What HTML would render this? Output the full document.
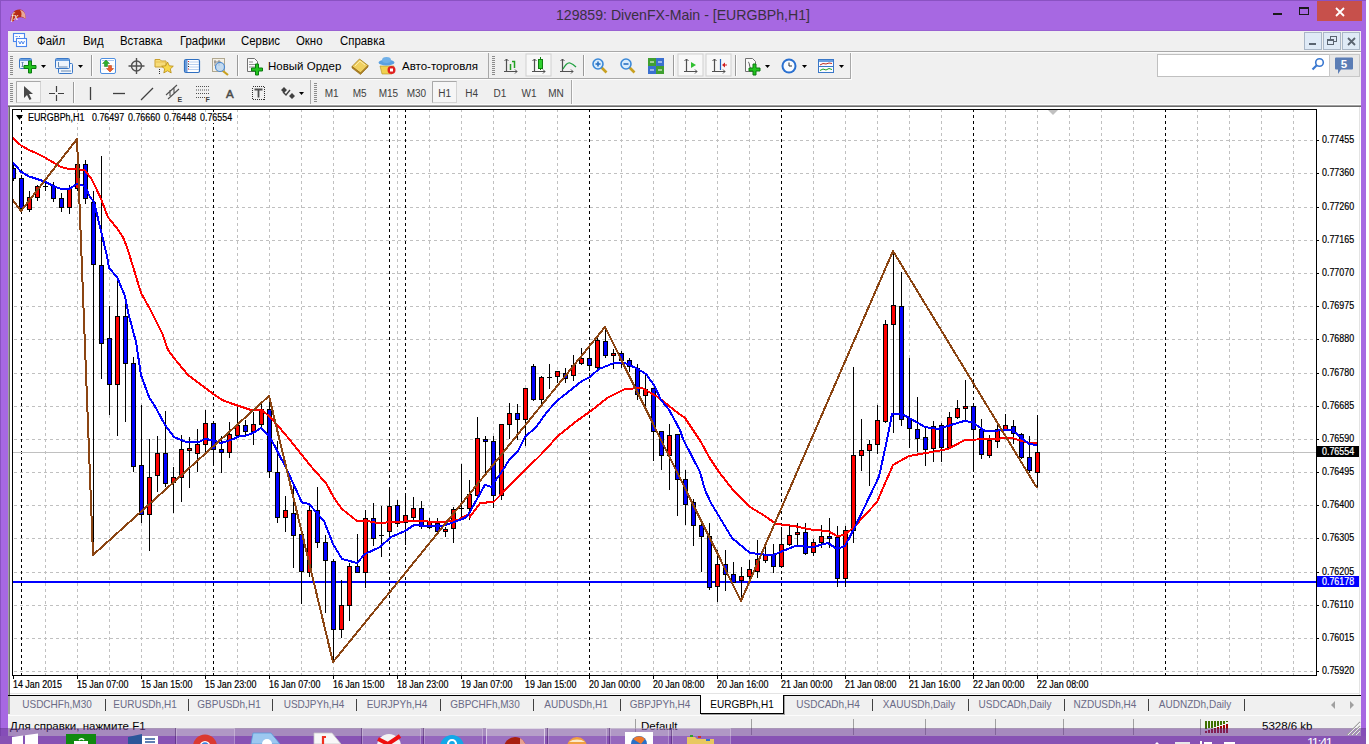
<!DOCTYPE html>
<html><head><meta charset="utf-8"><title>MT4</title>
<style>
*{margin:0;padding:0;box-sizing:border-box}
html,body{width:1369px;height:744px;overflow:hidden}
body{position:relative;background:#a768e2;font-family:"Liberation Sans",sans-serif;font-size:11px;color:#000}
.a{position:absolute}
.t{position:absolute;white-space:pre;line-height:1}
.b{-webkit-text-stroke:.2px currentColor}
.sep{position:absolute;width:1px;background:#a0a0a0}
.grip{position:absolute;width:5px;background:repeating-linear-gradient(#909090 0 1px,transparent 1px 2px)}
</style></head><body>

<div class="a" style="left:0;top:0;width:1369px;height:1px;background:#8a52c2"></div>
<div class="a" style="left:0;top:0;width:1px;height:744px;background:#8a52c2"></div>
<svg class="a" style="left:9px;top:8px" width="18" height="15"><path d="M1.5 13 C1 5 6 1 11 1.5 C15 2 17 6 16.5 11 C13 8 8 8.5 4 13.5 Z" fill="#b52a16"/><path d="M11 2 C15 2.5 17 6 16.5 11 C15 9 13.5 8.6 12 8.4 C13 6 12.5 4 11 2Z" fill="#e8a898"/><text x="2" y="12" font-family="Liberation Serif" font-style="italic" font-size="10" fill="#fff">fx</text></svg>
<div class="t" style="left:556px;top:7px;font-size:15px;color:#3a3040;transform:scaleX(.94);transform-origin:0 0">129859: DivenFX-Main - [EURGBPh,H1]</div>
<div class="a" style="left:1273px;top:13px;width:9px;height:2px;background:#1a1a1a"></div>
<div class="a" style="left:1299px;top:7px;width:10px;height:8px;border:1px solid #1a1a1a;border-top-width:2px"></div>
<div class="a" style="left:1317px;top:1px;width:45px;height:20px;background:#c7504b"></div>
<svg class="a" style="left:1335px;top:7px" width="10" height="10"><path d="M1 1L9 9M9 1L1 9" stroke="#fff" stroke-width="1.8"/></svg>
<div class="a" style="left:8px;top:30px;width:1353px;height:1px;background:#9a62d2"></div>
<div class="a" style="left:8px;top:31px;width:1353px;height:713px;background:#f0f0f0"></div>
<svg class="a" style="left:0;top:0" width="40" height="52"><rect x="13.5" y="33.5" width="11" height="8" fill="#fff" stroke="#4a86ee" stroke-width="1.1"/><path d="M15.5 37l1-1 1 1M19 36l1 1" stroke="#4a86ee" fill="none"/><rect x="16.5" y="38.5" width="10" height="8" fill="#fff" stroke="#4a86ee" stroke-width="1.1"/><path d="M18.5 41l1.5 3 1.5-3 1.5 3 1.5-3" stroke="#4a86ee" fill="none"/></svg>
<div class="t" style="left:37px;top:35px;font-size:12px;transform:scaleX(.95);transform-origin:0 0">Файл</div>
<div class="t" style="left:83px;top:35px;font-size:12px;transform:scaleX(.95);transform-origin:0 0">Вид</div>
<div class="t" style="left:120px;top:35px;font-size:12px;transform:scaleX(.95);transform-origin:0 0">Вставка</div>
<div class="t" style="left:180px;top:35px;font-size:12px;transform:scaleX(.95);transform-origin:0 0">Графики</div>
<div class="t" style="left:241px;top:35px;font-size:12px;transform:scaleX(.95);transform-origin:0 0">Сервис</div>
<div class="t" style="left:296px;top:35px;font-size:12px;transform:scaleX(.95);transform-origin:0 0">Окно</div>
<div class="t" style="left:340px;top:35px;font-size:12px;transform:scaleX(.95);transform-origin:0 0">Справка</div>
<div class="a" style="left:1304px;top:32px;width:18px;height:18px;background:#dfeaf6;border:1px solid #a9b6c6"></div>
<div class="a" style="left:1323px;top:32px;width:18px;height:18px;background:#dfeaf6;border:1px solid #a9b6c6"></div>
<div class="a" style="left:1342px;top:32px;width:18px;height:18px;background:#dfeaf6;border:1px solid #a9b6c6"></div>
<div class="a" style="left:1309px;top:43px;width:7px;height:2px;background:#5a6470"></div>
<svg class="a" style="left:1327px;top:36px" width="10" height="10"><rect x="3.5" y="0.5" width="6" height="5" fill="none" stroke="#5a6470"/><rect x="0.5" y="3.5" width="6" height="5" fill="#dfeaf6" stroke="#5a6470"/><path d="M0.5 4.5h6" stroke="#5a6470"/></svg>
<svg class="a" style="left:1347px;top:37px" width="9" height="9"><path d="M1 1L8 8M8 1L1 8" stroke="#5a6470" stroke-width="1.8"/></svg>
<div class="a" style="left:8px;top:51px;width:1353px;height:1px;background:#a8a8a8"></div>
<div class="a" style="left:8px;top:52px;width:1353px;height:1px;background:#fcfcfc"></div>
<div class="a" style="left:8px;top:78px;width:843px;height:1px;background:#a8a8a8"></div>
<div class="a" style="left:8px;top:79px;width:844px;height:1px;background:#fcfcfc"></div>
<svg class="a" style="left:0;top:0" width="1369" height="110"><rect x="10" y="56" width="3" height="1" fill="#8c8c8c"/><rect x="10" y="58" width="3" height="1" fill="#8c8c8c"/><rect x="10" y="60" width="3" height="1" fill="#8c8c8c"/><rect x="10" y="62" width="3" height="1" fill="#8c8c8c"/><rect x="10" y="64" width="3" height="1" fill="#8c8c8c"/><rect x="10" y="66" width="3" height="1" fill="#8c8c8c"/><rect x="10" y="68" width="3" height="1" fill="#8c8c8c"/><rect x="10" y="70" width="3" height="1" fill="#8c8c8c"/><rect x="10" y="72" width="3" height="1" fill="#8c8c8c"/><rect x="10" y="74" width="3" height="1" fill="#8c8c8c"/><rect x="19.5" y="58.5" width="12" height="10" rx="1" fill="#eef4fc" stroke="#3a78c8"/><rect x="20" y="59" width="11" height="2" fill="#6aa0e0"/><path d="M22.5 62v5M21.5 63l1-1 1 1M21.5 66l1 1 1-1" stroke="#6a8ab0" fill="none"/><path d="M28.5 61h3v4.5h4.5v3h-4.5v4.5h-3v-4.5h-4.5v-3h4.5z" fill="#22c41e" stroke="#0b7a10" stroke-width="1"/><path d="M41 65h5l-2.5 3z" fill="#000"/><rect x="58.5" y="63.5" width="14" height="10" rx="1" fill="#eef4fc" stroke="#3a78c8"/><rect x="55.5" y="58.5" width="14" height="10" rx="1" fill="#eef4fc" stroke="#3a78c8"/><rect x="56" y="59" width="13" height="2" fill="#6aa0e0"/><path d="M58.5 62v5h9M61 71h10" stroke="#6a8ab0" fill="none"/><path d="M78 65h5l-2.5 3z" fill="#000"/><rect x="91" y="55" width="1" height="21" fill="#9a9a9a"/><rect x="92" y="55" width="1" height="21" fill="#fdfdfd"/><rect x="100.5" y="58.5" width="15" height="15" rx="1.5" fill="#ffffff" stroke="#4f8fe0"/><path d="M102 60.5h12" stroke="#a8c8f0"/><path d="M101.5 66h13M101.5 69h13" stroke="#e0e0e0"/><path d="M106 60l3.5 3.5h-2v3h-3v-3h-2z" fill="#2cb02c" stroke="#1a7a1a" stroke-width=".5"/><path d="M110 72l3.5-3.5h-2v-3h-3v3h-2z" fill="#f05a28" stroke="#b03a10" stroke-width=".5"/><circle cx="136.5" cy="66" r="5" fill="none" stroke="#505050" stroke-width="1.4"/><path d="M136.5 58v16M128.5 66h16" stroke="#505050" stroke-width="1.4"/><path d="M155 59.5h5l1.5 1.5h4.5v6h-11z" fill="#f6dc7a" stroke="#c9a030"/><path d="M155 62h11" stroke="#e8c050"/><path d="M159.5 69v6" stroke="#303030" stroke-dasharray="1,1"/><path d="M167.5 62l1.8 3.8 4 .4-3 2.7.9 4-3.7-2.1-3.7 2.1.9-4-3-2.7 4-.4z" fill="#f8d84a" stroke="#b88a10" stroke-width=".8"/><rect x="184.5" y="59.5" width="15" height="13" rx="1.5" fill="#fff" stroke="#2f6fc0" stroke-width="1.2"/><rect x="185" y="60" width="2.5" height="12" fill="#6a9ad8"/><path d="M189 62h10M189 64.5h10M189 67h10M189 69.5h10" stroke="#b8d0f0"/><rect x="188" y="61" width="1" height="1" fill="#e02020"/><rect x="188" y="63.5" width="1" height="1" fill="#202020"/><rect x="188" y="66" width="1" height="1" fill="#202020"/><rect x="188" y="68.5" width="1" height="1" fill="#e02020"/><rect x="212.5" y="58.5" width="12" height="13" fill="#f4efe4" stroke="#b0a890"/><path d="M215 60v6M219 60v6M214 62h7" stroke="#707070" stroke-width=".8"/><path d="M223 71l5 4" stroke="#c8a020" stroke-width="2.2"/><circle cx="220" cy="67" r="4.5" fill="#b8d4f0" fill-opacity=".8" stroke="#4a88d0" stroke-width="1.2"/><rect x="237" y="55" width="1" height="21" fill="#9a9a9a"/><rect x="238" y="55" width="1" height="21" fill="#fdfdfd"/><path d="M247.5 58.5h7l3 3v10h-10z" fill="#fafafa" stroke="#707070"/><path d="M249 62h4M249 64.5h6M249 67h6" stroke="#909090"/><path d="M255.5 64.0h3v4.0h4.0v3h-4.0v4.0h-3v-4.0h-4.0v-3h4.0z" fill="#22c41e" stroke="#0b7a10" stroke-width="1"/><path d="M352 66.5l7.5-7.5 8.5 6.5-7.5 7.5z" fill="#f0d060" stroke="#a07818" stroke-width=".8"/><path d="M352 66.5v1.5l8.5 6.5 7.5-7.5v-1.5l-7.5 7.5z" fill="#b88a20" stroke="#8a6010" stroke-width=".6"/><path d="M355 66l5-5 5 4" fill="none" stroke="#fff4c0" stroke-width=".8"/><path d="M380 66h14l-2 8h-10z" fill="#f0d050" stroke="#b09020" stroke-width=".6"/><ellipse cx="386.5" cy="62.5" rx="8" ry="3" fill="#5aa0e0"/><ellipse cx="386.5" cy="60" rx="4.5" ry="3" fill="#70b0e8"/><circle cx="391.5" cy="70" r="4" fill="#e02020"/><rect x="390" y="68.5" width="3" height="3" fill="#fff"/><rect x="488" y="53" width="1" height="26" fill="#a8a8a8"/><rect x="492" y="56" width="3" height="1" fill="#8c8c8c"/><rect x="492" y="58" width="3" height="1" fill="#8c8c8c"/><rect x="492" y="60" width="3" height="1" fill="#8c8c8c"/><rect x="492" y="62" width="3" height="1" fill="#8c8c8c"/><rect x="492" y="64" width="3" height="1" fill="#8c8c8c"/><rect x="492" y="66" width="3" height="1" fill="#8c8c8c"/><rect x="492" y="68" width="3" height="1" fill="#8c8c8c"/><rect x="492" y="70" width="3" height="1" fill="#8c8c8c"/><rect x="492" y="72" width="3" height="1" fill="#8c8c8c"/><rect x="492" y="74" width="3" height="1" fill="#8c8c8c"/><path d="M506.5 59v13M504 71.5h13" stroke="#505050" stroke-width="1.2"/><path d="M504.5 61l2-2 2 2M515 69.5l2 2-2 2" fill="none" stroke="#505050"/><path d="M510.5 70v-6M512 61.5h2.5v6.5" fill="none" stroke="#20a020" stroke-width="1.5"/><rect x="526" y="54" width="25" height="22" fill="#f8f8f8" stroke="#d0d0d0"/><path d="M534.5 59v13M532 71.5h13" stroke="#505050" stroke-width="1.2"/><path d="M532.5 61l2-2 2 2M543 69.5l2 2-2 2" fill="none" stroke="#505050"/><path d="M540.5 57v13" stroke="#108010"/><rect x="538.5" y="59.5" width="4" height="9" fill="#30d030" stroke="#108010"/><path d="M562.5 59v13M560 71.5h13" stroke="#505050" stroke-width="1.2"/><path d="M560.5 61l2-2 2 2M571 69.5l2 2-2 2" fill="none" stroke="#505050"/><path d="M563 69q4-7 7-6t6 4" fill="none" stroke="#20a040" stroke-width="1.3"/><rect x="583" y="55" width="1" height="21" fill="#9a9a9a"/><rect x="584" y="55" width="1" height="21" fill="#fdfdfd"/><path d="M601.5 67.5l5 5" stroke="#c8a020" stroke-width="2.6"/><circle cx="598" cy="64" r="5" fill="#d8ecfc" stroke="#3a88d8" stroke-width="1.6"/><path d="M595.5 64h5" stroke="#2a70c0" stroke-width="1.6"/><path d="M598 61.5v5" stroke="#2a70c0" stroke-width="1.6"/><path d="M629.5 67.5l5 5" stroke="#c8a020" stroke-width="2.6"/><circle cx="626" cy="64" r="5" fill="#d8ecfc" stroke="#3a88d8" stroke-width="1.6"/><path d="M623.5 64h5" stroke="#2a70c0" stroke-width="1.6"/><rect x="648" y="58" width="8" height="8" fill="#40a030"/><rect x="656" y="58" width="8" height="8" fill="#3a70d0"/><rect x="648" y="66" width="8" height="8" fill="#3a70d0"/><rect x="656" y="66" width="8" height="8" fill="#40a030"/><path d="M650 62h4M658 62h4M650 70h4M658 70h4" stroke="#fff"/><rect x="673" y="55" width="1" height="21" fill="#9a9a9a"/><rect x="674" y="55" width="1" height="21" fill="#fdfdfd"/><rect x="678" y="54" width="25" height="22" fill="#f8f8f8" stroke="#d0d0d0"/><path d="M686.5 59v13M684 71.5h13" stroke="#505050" stroke-width="1.2"/><path d="M684.5 61l2-2 2 2M695 69.5l2 2-2 2" fill="none" stroke="#505050"/><path d="M691 62v6l5-3z" fill="#30c030"/><rect x="706" y="54" width="25" height="22" fill="#f8f8f8" stroke="#d0d0d0"/><path d="M714.5 59v13M712 71.5h13" stroke="#505050" stroke-width="1.2"/><path d="M712.5 61l2-2 2 2M723 69.5l2 2-2 2" fill="none" stroke="#505050"/><path d="M720.5 59v11" stroke="#2060c0" stroke-width="1.2"/><path d="M722 65l3-2.5v5z" fill="#d02020"/><path d="M724 65h3" stroke="#d02020"/><rect x="735" y="55" width="1" height="21" fill="#9a9a9a"/><rect x="736" y="55" width="1" height="21" fill="#fdfdfd"/><path d="M745.5 58.5h7l3 3v10h-10z" fill="#fafafa" stroke="#707070"/><path d="M748 62c2 0 1 6 3 6" fill="none" stroke="#606060"/><path d="M753.0 64.0h3v4.0h4.0v3h-4.0v4.0h-3v-4.0h-4.0v-3h4.0z" fill="#22c41e" stroke="#0b7a10" stroke-width="1"/><path d="M765 65h5l-2.5 3z" fill="#000"/><circle cx="789" cy="66" r="7.5" fill="#2a70d0"/><circle cx="789" cy="66" r="5.5" fill="#fafcff"/><path d="M789 62.5v3.5h3" fill="none" stroke="#303030"/><path d="M802 65h5l-2.5 3z" fill="#000"/><rect x="818.5" y="59.5" width="15" height="13" fill="#fafcff" stroke="#3a78c8"/><rect x="819" y="60" width="14" height="2" fill="#6aa0e0"/><path d="M819 66.5h14" stroke="#3a78c8"/><path d="M820 65l3-1.5 3 .5 3-1 3 .5" fill="none" stroke="#c03020"/><path d="M820 70.5l3-1.5 3 1 3-1.5 3 1" fill="none" stroke="#20a020"/><path d="M839 65h5l-2.5 3z" fill="#000"/><rect x="850" y="53" width="1" height="26" fill="#a8a8a8"/><rect x="851" y="53" width="1" height="27" fill="#fcfcfc"/><rect x="10" y="83" width="3" height="1" fill="#8c8c8c"/><rect x="10" y="85" width="3" height="1" fill="#8c8c8c"/><rect x="10" y="87" width="3" height="1" fill="#8c8c8c"/><rect x="10" y="89" width="3" height="1" fill="#8c8c8c"/><rect x="10" y="91" width="3" height="1" fill="#8c8c8c"/><rect x="10" y="93" width="3" height="1" fill="#8c8c8c"/><rect x="10" y="95" width="3" height="1" fill="#8c8c8c"/><rect x="10" y="97" width="3" height="1" fill="#8c8c8c"/><rect x="10" y="99" width="3" height="1" fill="#8c8c8c"/><rect x="10" y="101" width="3" height="1" fill="#8c8c8c"/><rect x="16.5" y="81.5" width="24" height="21" fill="#f6f6f6" stroke="#d4d4d4"/><path d="M16.5 102.5v-21h24" fill="none" stroke="#a8a8a8"/><path d="M24 86v12l3-3 2.5 5 2-1-2.5-5h4z" fill="#484848"/><path d="M49 93.5h6M58 93.5h6M56.5 86v6M56.5 95v6" stroke="#404040" stroke-width="1.2"/><rect x="73" y="82" width="1" height="21" fill="#9a9a9a"/><rect x="74" y="82" width="1" height="21" fill="#fdfdfd"/><path d="M90.5 87v13" stroke="#404040" stroke-width="1.3"/><path d="M113 93.5h12" stroke="#404040" stroke-width="1.3"/><path d="M141 100l12-12" stroke="#404040" stroke-width="1.2"/><path d="M166 95l11-10M168 99l11-10M170 90v6M174 87v7" stroke="#505050" stroke-width="1.1"/><text x="177.5" y="101.5" font-family="Liberation Sans" font-weight="bold" font-size="7" fill="#404040">E</text><path d="M196 86.5h13M196 90h13M196 93.5h13M196 97.5h9" stroke="#505050" stroke-dasharray="1,1"/><text x="205.5" y="101.5" font-family="Liberation Sans" font-weight="bold" font-size="7" fill="#404040">F</text><text x="226" y="97.5" font-family="Liberation Sans" font-size="11.5" fill="#4a4a4a" stroke="#4a4a4a" stroke-width=".5">A</text><rect x="252.5" y="86.5" width="12" height="13" fill="none" stroke="#303030" stroke-dasharray="1,1" shape-rendering="crispEdges"/><path d="M254.5 89.5h8M258.5 89.5v8" stroke="#505050" stroke-width="1.8"/><path d="M281 90l3-3 3 3-3 3z M289 96l3-3 3 3-3 3z" fill="#404040"/><path d="M283 92l3 3 4-5" fill="none" stroke="#404040" stroke-width="1.4"/><path d="M299 92h5l-2.5 3z" fill="#000"/><rect x="310" y="80" width="1" height="25" fill="#a8a8a8"/><rect x="314" y="83" width="3" height="1" fill="#8c8c8c"/><rect x="314" y="85" width="3" height="1" fill="#8c8c8c"/><rect x="314" y="87" width="3" height="1" fill="#8c8c8c"/><rect x="314" y="89" width="3" height="1" fill="#8c8c8c"/><rect x="314" y="91" width="3" height="1" fill="#8c8c8c"/><rect x="314" y="93" width="3" height="1" fill="#8c8c8c"/><rect x="314" y="95" width="3" height="1" fill="#8c8c8c"/><rect x="314" y="97" width="3" height="1" fill="#8c8c8c"/><rect x="314" y="99" width="3" height="1" fill="#8c8c8c"/><rect x="314" y="101" width="3" height="1" fill="#8c8c8c"/><rect x="432.5" y="81.5" width="24" height="21" fill="#f6f6f6" stroke="#d4d4d4"/><path d="M432.5 102.5v-21h24" fill="none" stroke="#a8a8a8"/><rect x="571" y="80" width="1" height="25" fill="#a8a8a8"/><rect x="572" y="80" width="1" height="25" fill="#fcfcfc"/></svg>
<div class="t" style="left:268px;top:61px;font-size:11.5px">Новый Ордер</div>
<div class="t" style="left:402px;top:61px;font-size:11.5px">Авто-торговля</div>
<div class="a" style="left:1157px;top:54px;width:173px;height:23px;background:#fff;border:1px solid #c0c0c0"></div>
<svg class="a" style="left:1311px;top:57px" width="14" height="14"><circle cx="8.5" cy="5.5" r="3.8" fill="none" stroke="#3a78d0" stroke-width="1.6"/><path d="M6 8L1.5 12.5" stroke="#3a78d0" stroke-width="2.2"/></svg>
<div class="a" style="left:1329px;top:54px;width:31px;height:23px;background:#e8e8e8;border:1px solid #c8c8c8"></div>
<svg class="a" style="left:1333px;top:57px" width="21" height="19"><path d="M2 1.5q0-1 1-1h16q1 0 1 1v10q0 1-1 1h-11l-3 4.5v-4.5h-2q-1 0-1-1z" fill="#5b7db5"/><text x="11" y="11" text-anchor="middle" font-family="Liberation Sans" font-weight="bold" font-size="11.5" fill="#fff">5</text></svg>
<div class="t" style="left:311.6px;width:40px;text-align:center;top:89px;font-size:10px;color:#404040">M1</div>
<div class="t" style="left:339.6px;width:40px;text-align:center;top:89px;font-size:10px;color:#404040">M5</div>
<div class="t" style="left:368.4px;width:40px;text-align:center;top:89px;font-size:10px;color:#404040">M15</div>
<div class="t" style="left:396.4px;width:40px;text-align:center;top:89px;font-size:10px;color:#404040">M30</div>
<div class="t" style="left:424.6px;width:40px;text-align:center;top:89px;font-size:10px;color:#404040">H1</div>
<div class="t" style="left:451.6px;width:40px;text-align:center;top:89px;font-size:10px;color:#404040">H4</div>
<div class="t" style="left:480px;width:40px;text-align:center;top:89px;font-size:10px;color:#404040">D1</div>
<div class="t" style="left:509px;width:40px;text-align:center;top:89px;font-size:10px;color:#404040">W1</div>
<div class="t" style="left:536px;width:40px;text-align:center;top:89px;font-size:10px;color:#404040">MN</div>
<div class="a" style="left:8px;top:104px;width:1353px;height:1px;background:#fcfcfc"></div>
<div class="a" style="left:8px;top:105px;width:1353px;height:1px;background:#a0a0a0"></div>
<div class="a" style="left:8px;top:106px;width:1353px;height:1px;background:#696969"></div>
<div class="a" style="left:8px;top:107px;width:1px;height:607px;background:#a0a0a0"></div>
<div class="a" style="left:9px;top:107px;width:1px;height:607px;background:#696969"></div>
<div class="a" style="left:10px;top:107px;width:1349px;height:588px;background:#fff"></div>
<div class="a" style="left:1359px;top:107px;width:1px;height:588px;background:#e3e3e3"></div>
<div class="a" style="left:1360px;top:107px;width:1px;height:588px;background:#fff"></div>
<svg class="a" style="left:0;top:0" width="1369" height="744" shape-rendering="crispEdges"><defs><clipPath id="cc"><rect x="13" y="110" width="1303" height="565"/></clipPath></defs><g clip-path="url(#cc)"><line x1="14" y1="140.5" x2="1316" y2="140.5" stroke="#c0c0c0" stroke-dasharray="3,3"/>
<line x1="14" y1="173.5" x2="1316" y2="173.5" stroke="#c0c0c0" stroke-dasharray="3,3"/>
<line x1="14" y1="207.5" x2="1316" y2="207.5" stroke="#c0c0c0" stroke-dasharray="3,3"/>
<line x1="14" y1="240.5" x2="1316" y2="240.5" stroke="#c0c0c0" stroke-dasharray="3,3"/>
<line x1="14" y1="273.5" x2="1316" y2="273.5" stroke="#c0c0c0" stroke-dasharray="3,3"/>
<line x1="14" y1="306.5" x2="1316" y2="306.5" stroke="#c0c0c0" stroke-dasharray="3,3"/>
<line x1="14" y1="339.5" x2="1316" y2="339.5" stroke="#c0c0c0" stroke-dasharray="3,3"/>
<line x1="14" y1="373.5" x2="1316" y2="373.5" stroke="#c0c0c0" stroke-dasharray="3,3"/>
<line x1="14" y1="406.5" x2="1316" y2="406.5" stroke="#c0c0c0" stroke-dasharray="3,3"/>
<line x1="14" y1="439.5" x2="1316" y2="439.5" stroke="#c0c0c0" stroke-dasharray="3,3"/>
<line x1="14" y1="472.5" x2="1316" y2="472.5" stroke="#c0c0c0" stroke-dasharray="3,3"/>
<line x1="14" y1="505.5" x2="1316" y2="505.5" stroke="#c0c0c0" stroke-dasharray="3,3"/>
<line x1="14" y1="538.5" x2="1316" y2="538.5" stroke="#c0c0c0" stroke-dasharray="3,3"/>
<line x1="14" y1="572.5" x2="1316" y2="572.5" stroke="#c0c0c0" stroke-dasharray="3,3"/>
<line x1="14" y1="605.5" x2="1316" y2="605.5" stroke="#c0c0c0" stroke-dasharray="3,3"/>
<line x1="14" y1="638.5" x2="1316" y2="638.5" stroke="#c0c0c0" stroke-dasharray="3,3"/>
<line x1="14" y1="671.5" x2="1316" y2="671.5" stroke="#c0c0c0" stroke-dasharray="3,3"/>
<line x1="45.5" y1="109" x2="45.5" y2="675" stroke="#c0c0c0" stroke-dasharray="3,3"/>
<line x1="77.5" y1="109" x2="77.5" y2="675" stroke="#c0c0c0" stroke-dasharray="3,3"/>
<line x1="109.5" y1="109" x2="109.5" y2="675" stroke="#c0c0c0" stroke-dasharray="3,3"/>
<line x1="141.5" y1="109" x2="141.5" y2="675" stroke="#c0c0c0" stroke-dasharray="3,3"/>
<line x1="173.5" y1="109" x2="173.5" y2="675" stroke="#c0c0c0" stroke-dasharray="3,3"/>
<line x1="205.5" y1="109" x2="205.5" y2="675" stroke="#c0c0c0" stroke-dasharray="3,3"/>
<line x1="237.5" y1="109" x2="237.5" y2="675" stroke="#c0c0c0" stroke-dasharray="3,3"/>
<line x1="269.5" y1="109" x2="269.5" y2="675" stroke="#c0c0c0" stroke-dasharray="3,3"/>
<line x1="301.5" y1="109" x2="301.5" y2="675" stroke="#c0c0c0" stroke-dasharray="3,3"/>
<line x1="333.5" y1="109" x2="333.5" y2="675" stroke="#c0c0c0" stroke-dasharray="3,3"/>
<line x1="365.5" y1="109" x2="365.5" y2="675" stroke="#c0c0c0" stroke-dasharray="3,3"/>
<line x1="397.5" y1="109" x2="397.5" y2="675" stroke="#c0c0c0" stroke-dasharray="3,3"/>
<line x1="429.5" y1="109" x2="429.5" y2="675" stroke="#c0c0c0" stroke-dasharray="3,3"/>
<line x1="461.5" y1="109" x2="461.5" y2="675" stroke="#c0c0c0" stroke-dasharray="3,3"/>
<line x1="493.5" y1="109" x2="493.5" y2="675" stroke="#c0c0c0" stroke-dasharray="3,3"/>
<line x1="525.5" y1="109" x2="525.5" y2="675" stroke="#c0c0c0" stroke-dasharray="3,3"/>
<line x1="557.5" y1="109" x2="557.5" y2="675" stroke="#c0c0c0" stroke-dasharray="3,3"/>
<line x1="589.5" y1="109" x2="589.5" y2="675" stroke="#c0c0c0" stroke-dasharray="3,3"/>
<line x1="621.5" y1="109" x2="621.5" y2="675" stroke="#c0c0c0" stroke-dasharray="3,3"/>
<line x1="653.5" y1="109" x2="653.5" y2="675" stroke="#c0c0c0" stroke-dasharray="3,3"/>
<line x1="685.5" y1="109" x2="685.5" y2="675" stroke="#c0c0c0" stroke-dasharray="3,3"/>
<line x1="717.5" y1="109" x2="717.5" y2="675" stroke="#c0c0c0" stroke-dasharray="3,3"/>
<line x1="749.5" y1="109" x2="749.5" y2="675" stroke="#c0c0c0" stroke-dasharray="3,3"/>
<line x1="781.5" y1="109" x2="781.5" y2="675" stroke="#c0c0c0" stroke-dasharray="3,3"/>
<line x1="813.5" y1="109" x2="813.5" y2="675" stroke="#c0c0c0" stroke-dasharray="3,3"/>
<line x1="845.5" y1="109" x2="845.5" y2="675" stroke="#c0c0c0" stroke-dasharray="3,3"/>
<line x1="877.5" y1="109" x2="877.5" y2="675" stroke="#c0c0c0" stroke-dasharray="3,3"/>
<line x1="909.5" y1="109" x2="909.5" y2="675" stroke="#c0c0c0" stroke-dasharray="3,3"/>
<line x1="941.5" y1="109" x2="941.5" y2="675" stroke="#c0c0c0" stroke-dasharray="3,3"/>
<line x1="973.5" y1="109" x2="973.5" y2="675" stroke="#c0c0c0" stroke-dasharray="3,3"/>
<line x1="1005.5" y1="109" x2="1005.5" y2="675" stroke="#c0c0c0" stroke-dasharray="3,3"/>
<line x1="1037.5" y1="109" x2="1037.5" y2="675" stroke="#c0c0c0" stroke-dasharray="3,3"/>
<line x1="1069.5" y1="109" x2="1069.5" y2="675" stroke="#c0c0c0" stroke-dasharray="3,3"/>
<line x1="1101.5" y1="109" x2="1101.5" y2="675" stroke="#c0c0c0" stroke-dasharray="3,3"/>
<line x1="1133.5" y1="109" x2="1133.5" y2="675" stroke="#c0c0c0" stroke-dasharray="3,3"/>
<line x1="1165.5" y1="109" x2="1165.5" y2="675" stroke="#c0c0c0" stroke-dasharray="3,3"/>
<line x1="1197.5" y1="109" x2="1197.5" y2="675" stroke="#c0c0c0" stroke-dasharray="3,3"/>
<line x1="1229.5" y1="109" x2="1229.5" y2="675" stroke="#c0c0c0" stroke-dasharray="3,3"/>
<line x1="1261.5" y1="109" x2="1261.5" y2="675" stroke="#c0c0c0" stroke-dasharray="3,3"/>
<line x1="1293.5" y1="109" x2="1293.5" y2="675" stroke="#c0c0c0" stroke-dasharray="3,3"/>
<line x1="21.5" y1="109" x2="21.5" y2="675" stroke="#000" stroke-dasharray="3,3"/>
<line x1="213.5" y1="109" x2="213.5" y2="675" stroke="#000" stroke-dasharray="3,3"/>
<line x1="389.5" y1="109" x2="389.5" y2="675" stroke="#000" stroke-dasharray="3,3"/>
<line x1="405.5" y1="109" x2="405.5" y2="675" stroke="#000" stroke-dasharray="3,3"/>
<line x1="589.5" y1="109" x2="589.5" y2="675" stroke="#000" stroke-dasharray="3,3"/>
<line x1="781.5" y1="109" x2="781.5" y2="675" stroke="#000" stroke-dasharray="3,3"/>
<line x1="973.5" y1="109" x2="973.5" y2="675" stroke="#000" stroke-dasharray="3,3"/>
<line x1="1165.5" y1="109" x2="1165.5" y2="675" stroke="#000" stroke-dasharray="3,3"/>
<line x1="13" y1="452.5" x2="1316" y2="452.5" stroke="#c0c0c0"/>
<rect x="13" y="581" width="1303" height="2" fill="#0000ff"/>
<rect x="13" y="163" width="1" height="18" fill="#000"/>
<rect x="11" y="168" width="5" height="11" fill="#000"/>
<rect x="12" y="169" width="3" height="9" fill="#0000ff"/>
<rect x="21" y="176" width="1" height="34" fill="#000"/>
<rect x="19" y="178" width="5" height="31" fill="#000"/>
<rect x="20" y="179" width="3" height="29" fill="#0000ff"/>
<rect x="29" y="191" width="1" height="21" fill="#000"/>
<rect x="27" y="197" width="5" height="13" fill="#000"/>
<rect x="28" y="198" width="3" height="11" fill="#ff0000"/>
<rect x="37" y="185" width="1" height="16" fill="#000"/>
<rect x="35" y="186" width="5" height="12" fill="#000"/>
<rect x="36" y="187" width="3" height="10" fill="#ff0000"/>
<rect x="45" y="183" width="1" height="8" fill="#000"/>
<rect x="43" y="186" width="5" height="1" fill="#000"/>
<rect x="53" y="182" width="1" height="20" fill="#000"/>
<rect x="51" y="186" width="5" height="13" fill="#000"/>
<rect x="52" y="187" width="3" height="11" fill="#0000ff"/>
<rect x="61" y="193" width="1" height="19" fill="#000"/>
<rect x="59" y="198" width="5" height="10" fill="#000"/>
<rect x="60" y="199" width="3" height="8" fill="#0000ff"/>
<rect x="69" y="185" width="1" height="29" fill="#000"/>
<rect x="67" y="188" width="5" height="20" fill="#000"/>
<rect x="68" y="189" width="3" height="18" fill="#ff0000"/>
<rect x="77" y="139" width="1" height="52" fill="#000"/>
<rect x="75" y="164" width="5" height="25" fill="#000"/>
<rect x="76" y="165" width="3" height="23" fill="#ff0000"/>
<rect x="85" y="160" width="1" height="44" fill="#000"/>
<rect x="83" y="164" width="5" height="35" fill="#000"/>
<rect x="84" y="165" width="3" height="33" fill="#0000ff"/>
<rect x="93" y="191" width="1" height="365" fill="#000"/>
<rect x="91" y="202" width="5" height="63" fill="#000"/>
<rect x="92" y="203" width="3" height="61" fill="#0000ff"/>
<rect x="101" y="156" width="1" height="223" fill="#000"/>
<rect x="99" y="265" width="5" height="79" fill="#000"/>
<rect x="100" y="266" width="3" height="77" fill="#0000ff"/>
<rect x="109" y="306" width="1" height="109" fill="#000"/>
<rect x="107" y="338" width="5" height="47" fill="#000"/>
<rect x="108" y="339" width="3" height="45" fill="#0000ff"/>
<rect x="117" y="280" width="1" height="156" fill="#000"/>
<rect x="115" y="316" width="5" height="69" fill="#000"/>
<rect x="116" y="317" width="3" height="67" fill="#ff0000"/>
<rect x="125" y="304" width="1" height="118" fill="#000"/>
<rect x="123" y="316" width="5" height="48" fill="#000"/>
<rect x="124" y="317" width="3" height="46" fill="#0000ff"/>
<rect x="133" y="357" width="1" height="115" fill="#000"/>
<rect x="131" y="363" width="5" height="104" fill="#000"/>
<rect x="132" y="364" width="3" height="102" fill="#0000ff"/>
<rect x="141" y="405" width="1" height="118" fill="#000"/>
<rect x="139" y="465" width="5" height="50" fill="#000"/>
<rect x="140" y="466" width="3" height="48" fill="#0000ff"/>
<rect x="149" y="439" width="1" height="112" fill="#000"/>
<rect x="147" y="477" width="5" height="38" fill="#000"/>
<rect x="148" y="478" width="3" height="36" fill="#ff0000"/>
<rect x="157" y="436" width="1" height="56" fill="#000"/>
<rect x="155" y="453" width="5" height="23" fill="#000"/>
<rect x="156" y="454" width="3" height="21" fill="#ff0000"/>
<rect x="165" y="411" width="1" height="76" fill="#000"/>
<rect x="163" y="453" width="5" height="31" fill="#000"/>
<rect x="164" y="454" width="3" height="29" fill="#0000ff"/>
<rect x="173" y="467" width="1" height="46" fill="#000"/>
<rect x="171" y="477" width="5" height="6" fill="#000"/>
<rect x="172" y="478" width="3" height="4" fill="#ff0000"/>
<rect x="181" y="435" width="1" height="67" fill="#000"/>
<rect x="179" y="449" width="5" height="29" fill="#000"/>
<rect x="180" y="450" width="3" height="27" fill="#ff0000"/>
<rect x="189" y="437" width="1" height="51" fill="#000"/>
<rect x="187" y="448" width="5" height="3" fill="#000"/>
<rect x="188" y="449" width="3" height="1" fill="#ff0000"/>
<rect x="197" y="429" width="1" height="43" fill="#000"/>
<rect x="195" y="444" width="5" height="10" fill="#000"/>
<rect x="196" y="445" width="3" height="8" fill="#ff0000"/>
<rect x="205" y="410" width="1" height="43" fill="#000"/>
<rect x="203" y="423" width="5" height="22" fill="#000"/>
<rect x="204" y="424" width="3" height="20" fill="#ff0000"/>
<rect x="213" y="423" width="1" height="43" fill="#000"/>
<rect x="211" y="423" width="5" height="27" fill="#000"/>
<rect x="212" y="424" width="3" height="25" fill="#0000ff"/>
<rect x="221" y="436" width="1" height="37" fill="#000"/>
<rect x="219" y="449" width="5" height="4" fill="#000"/>
<rect x="220" y="450" width="3" height="2" fill="#0000ff"/>
<rect x="229" y="422" width="1" height="36" fill="#000"/>
<rect x="227" y="434" width="5" height="19" fill="#000"/>
<rect x="228" y="435" width="3" height="17" fill="#ff0000"/>
<rect x="237" y="406" width="1" height="31" fill="#000"/>
<rect x="235" y="425" width="5" height="11" fill="#000"/>
<rect x="236" y="426" width="3" height="9" fill="#ff0000"/>
<rect x="245" y="420" width="1" height="17" fill="#000"/>
<rect x="243" y="425" width="5" height="7" fill="#000"/>
<rect x="244" y="426" width="3" height="5" fill="#0000ff"/>
<rect x="253" y="412" width="1" height="33" fill="#000"/>
<rect x="251" y="424" width="5" height="8" fill="#000"/>
<rect x="252" y="425" width="3" height="6" fill="#ff0000"/>
<rect x="261" y="404" width="1" height="25" fill="#000"/>
<rect x="259" y="409" width="5" height="16" fill="#000"/>
<rect x="260" y="410" width="3" height="14" fill="#ff0000"/>
<rect x="269" y="396" width="1" height="82" fill="#000"/>
<rect x="267" y="409" width="5" height="63" fill="#000"/>
<rect x="268" y="410" width="3" height="61" fill="#0000ff"/>
<rect x="277" y="441" width="1" height="82" fill="#000"/>
<rect x="275" y="472" width="5" height="46" fill="#000"/>
<rect x="276" y="473" width="3" height="44" fill="#0000ff"/>
<rect x="285" y="496" width="1" height="36" fill="#000"/>
<rect x="283" y="510" width="5" height="8" fill="#000"/>
<rect x="284" y="511" width="3" height="6" fill="#ff0000"/>
<rect x="293" y="486" width="1" height="82" fill="#000"/>
<rect x="291" y="513" width="5" height="23" fill="#000"/>
<rect x="292" y="514" width="3" height="21" fill="#0000ff"/>
<rect x="301" y="534" width="1" height="70" fill="#000"/>
<rect x="299" y="534" width="5" height="38" fill="#000"/>
<rect x="300" y="535" width="3" height="36" fill="#0000ff"/>
<rect x="309" y="506" width="1" height="71" fill="#000"/>
<rect x="307" y="510" width="5" height="63" fill="#000"/>
<rect x="308" y="511" width="3" height="61" fill="#ff0000"/>
<rect x="317" y="487" width="1" height="61" fill="#000"/>
<rect x="315" y="510" width="5" height="33" fill="#000"/>
<rect x="316" y="511" width="3" height="31" fill="#0000ff"/>
<rect x="325" y="535" width="1" height="78" fill="#000"/>
<rect x="323" y="542" width="5" height="19" fill="#000"/>
<rect x="324" y="543" width="3" height="17" fill="#0000ff"/>
<rect x="333" y="559" width="1" height="103" fill="#000"/>
<rect x="331" y="561" width="5" height="69" fill="#000"/>
<rect x="332" y="562" width="3" height="67" fill="#0000ff"/>
<rect x="341" y="580" width="1" height="58" fill="#000"/>
<rect x="339" y="605" width="5" height="25" fill="#000"/>
<rect x="340" y="606" width="3" height="23" fill="#ff0000"/>
<rect x="349" y="563" width="1" height="58" fill="#000"/>
<rect x="347" y="566" width="5" height="40" fill="#000"/>
<rect x="348" y="567" width="3" height="38" fill="#ff0000"/>
<rect x="357" y="534" width="1" height="39" fill="#000"/>
<rect x="355" y="566" width="5" height="7" fill="#000"/>
<rect x="356" y="567" width="3" height="5" fill="#0000ff"/>
<rect x="365" y="510" width="1" height="78" fill="#000"/>
<rect x="363" y="518" width="5" height="55" fill="#000"/>
<rect x="364" y="519" width="3" height="53" fill="#ff0000"/>
<rect x="373" y="503" width="1" height="43" fill="#000"/>
<rect x="371" y="518" width="5" height="21" fill="#000"/>
<rect x="372" y="519" width="3" height="19" fill="#0000ff"/>
<rect x="381" y="506" width="1" height="51" fill="#000"/>
<rect x="379" y="535" width="5" height="1" fill="#000"/>
<rect x="389" y="487" width="1" height="49" fill="#000"/>
<rect x="387" y="506" width="5" height="26" fill="#000"/>
<rect x="388" y="507" width="3" height="24" fill="#ff0000"/>
<rect x="397" y="500" width="1" height="27" fill="#000"/>
<rect x="395" y="505" width="5" height="19" fill="#000"/>
<rect x="396" y="506" width="3" height="17" fill="#0000ff"/>
<rect x="405" y="494" width="1" height="51" fill="#000"/>
<rect x="403" y="515" width="5" height="8" fill="#000"/>
<rect x="404" y="516" width="3" height="6" fill="#ff0000"/>
<rect x="413" y="497" width="1" height="24" fill="#000"/>
<rect x="411" y="508" width="5" height="10" fill="#000"/>
<rect x="412" y="509" width="3" height="8" fill="#ff0000"/>
<rect x="421" y="501" width="1" height="28" fill="#000"/>
<rect x="419" y="508" width="5" height="19" fill="#000"/>
<rect x="420" y="509" width="3" height="17" fill="#0000ff"/>
<rect x="429" y="518" width="1" height="11" fill="#000"/>
<rect x="427" y="522" width="5" height="6" fill="#000"/>
<rect x="428" y="523" width="3" height="4" fill="#ff0000"/>
<rect x="437" y="518" width="1" height="16" fill="#000"/>
<rect x="435" y="523" width="5" height="9" fill="#000"/>
<rect x="436" y="524" width="3" height="7" fill="#0000ff"/>
<rect x="445" y="527" width="1" height="10" fill="#000"/>
<rect x="443" y="529" width="5" height="3" fill="#000"/>
<rect x="444" y="530" width="3" height="1" fill="#ff0000"/>
<rect x="453" y="507" width="1" height="36" fill="#000"/>
<rect x="451" y="509" width="5" height="20" fill="#000"/>
<rect x="452" y="510" width="3" height="18" fill="#ff0000"/>
<rect x="461" y="464" width="1" height="56" fill="#000"/>
<rect x="459" y="508" width="5" height="1" fill="#000"/>
<rect x="469" y="480" width="1" height="40" fill="#000"/>
<rect x="467" y="494" width="5" height="15" fill="#000"/>
<rect x="468" y="495" width="3" height="13" fill="#ff0000"/>
<rect x="477" y="417" width="1" height="80" fill="#000"/>
<rect x="475" y="438" width="5" height="58" fill="#000"/>
<rect x="476" y="439" width="3" height="56" fill="#ff0000"/>
<rect x="485" y="436" width="1" height="37" fill="#000"/>
<rect x="483" y="439" width="5" height="3" fill="#000"/>
<rect x="484" y="440" width="3" height="1" fill="#0000ff"/>
<rect x="493" y="436" width="1" height="72" fill="#000"/>
<rect x="491" y="441" width="5" height="55" fill="#000"/>
<rect x="492" y="442" width="3" height="53" fill="#0000ff"/>
<rect x="501" y="424" width="1" height="76" fill="#000"/>
<rect x="499" y="424" width="5" height="72" fill="#000"/>
<rect x="500" y="425" width="3" height="70" fill="#ff0000"/>
<rect x="509" y="403" width="1" height="36" fill="#000"/>
<rect x="507" y="413" width="5" height="12" fill="#000"/>
<rect x="508" y="414" width="3" height="10" fill="#ff0000"/>
<rect x="517" y="404" width="1" height="36" fill="#000"/>
<rect x="515" y="413" width="5" height="7" fill="#000"/>
<rect x="516" y="414" width="3" height="5" fill="#0000ff"/>
<rect x="525" y="388" width="1" height="58" fill="#000"/>
<rect x="523" y="388" width="5" height="32" fill="#000"/>
<rect x="524" y="389" width="3" height="30" fill="#ff0000"/>
<rect x="533" y="364" width="1" height="37" fill="#000"/>
<rect x="531" y="366" width="5" height="34" fill="#000"/>
<rect x="532" y="367" width="3" height="32" fill="#0000ff"/>
<rect x="541" y="376" width="1" height="30" fill="#000"/>
<rect x="539" y="377" width="5" height="23" fill="#000"/>
<rect x="540" y="378" width="3" height="21" fill="#ff0000"/>
<rect x="549" y="364" width="1" height="25" fill="#000"/>
<rect x="547" y="377" width="5" height="1" fill="#000"/>
<rect x="557" y="371" width="1" height="12" fill="#000"/>
<rect x="555" y="371" width="5" height="6" fill="#000"/>
<rect x="556" y="372" width="3" height="4" fill="#ff0000"/>
<rect x="565" y="368" width="1" height="15" fill="#000"/>
<rect x="563" y="373" width="5" height="6" fill="#000"/>
<rect x="564" y="374" width="3" height="4" fill="#0000ff"/>
<rect x="573" y="355" width="1" height="26" fill="#000"/>
<rect x="571" y="365" width="5" height="11" fill="#000"/>
<rect x="572" y="366" width="3" height="9" fill="#ff0000"/>
<rect x="581" y="348" width="1" height="17" fill="#000"/>
<rect x="579" y="358" width="5" height="6" fill="#000"/>
<rect x="580" y="359" width="3" height="4" fill="#ff0000"/>
<rect x="589" y="344" width="1" height="27" fill="#000"/>
<rect x="587" y="358" width="5" height="8" fill="#000"/>
<rect x="588" y="359" width="3" height="6" fill="#0000ff"/>
<rect x="597" y="338" width="1" height="31" fill="#000"/>
<rect x="595" y="340" width="5" height="28" fill="#000"/>
<rect x="596" y="341" width="3" height="26" fill="#ff0000"/>
<rect x="605" y="327" width="1" height="31" fill="#000"/>
<rect x="603" y="341" width="5" height="15" fill="#000"/>
<rect x="604" y="342" width="3" height="13" fill="#0000ff"/>
<rect x="613" y="349" width="1" height="20" fill="#000"/>
<rect x="611" y="353" width="5" height="3" fill="#000"/>
<rect x="612" y="354" width="3" height="1" fill="#ff0000"/>
<rect x="621" y="351" width="1" height="17" fill="#000"/>
<rect x="619" y="353" width="5" height="8" fill="#000"/>
<rect x="620" y="354" width="3" height="6" fill="#0000ff"/>
<rect x="629" y="358" width="1" height="14" fill="#000"/>
<rect x="627" y="360" width="5" height="7" fill="#000"/>
<rect x="628" y="361" width="3" height="5" fill="#0000ff"/>
<rect x="637" y="364" width="1" height="36" fill="#000"/>
<rect x="635" y="368" width="5" height="27" fill="#000"/>
<rect x="636" y="369" width="3" height="25" fill="#0000ff"/>
<rect x="645" y="375" width="1" height="31" fill="#000"/>
<rect x="643" y="389" width="5" height="7" fill="#000"/>
<rect x="644" y="390" width="3" height="5" fill="#ff0000"/>
<rect x="653" y="388" width="1" height="73" fill="#000"/>
<rect x="651" y="388" width="5" height="44" fill="#000"/>
<rect x="652" y="389" width="3" height="42" fill="#0000ff"/>
<rect x="661" y="431" width="1" height="39" fill="#000"/>
<rect x="659" y="431" width="5" height="25" fill="#000"/>
<rect x="660" y="432" width="3" height="23" fill="#0000ff"/>
<rect x="669" y="424" width="1" height="66" fill="#000"/>
<rect x="667" y="435" width="5" height="21" fill="#000"/>
<rect x="668" y="436" width="3" height="19" fill="#ff0000"/>
<rect x="677" y="434" width="1" height="82" fill="#000"/>
<rect x="675" y="434" width="5" height="46" fill="#000"/>
<rect x="676" y="435" width="3" height="44" fill="#0000ff"/>
<rect x="685" y="470" width="1" height="55" fill="#000"/>
<rect x="683" y="479" width="5" height="26" fill="#000"/>
<rect x="684" y="480" width="3" height="24" fill="#0000ff"/>
<rect x="693" y="499" width="1" height="47" fill="#000"/>
<rect x="691" y="502" width="5" height="24" fill="#000"/>
<rect x="692" y="503" width="3" height="22" fill="#0000ff"/>
<rect x="701" y="524" width="1" height="48" fill="#000"/>
<rect x="699" y="525" width="5" height="12" fill="#000"/>
<rect x="700" y="526" width="3" height="10" fill="#0000ff"/>
<rect x="709" y="523" width="1" height="67" fill="#000"/>
<rect x="707" y="536" width="5" height="52" fill="#000"/>
<rect x="708" y="537" width="3" height="50" fill="#0000ff"/>
<rect x="717" y="550" width="1" height="52" fill="#000"/>
<rect x="715" y="564" width="5" height="23" fill="#000"/>
<rect x="716" y="565" width="3" height="21" fill="#ff0000"/>
<rect x="725" y="550" width="1" height="41" fill="#000"/>
<rect x="723" y="564" width="5" height="11" fill="#000"/>
<rect x="724" y="565" width="3" height="9" fill="#0000ff"/>
<rect x="733" y="562" width="1" height="21" fill="#000"/>
<rect x="731" y="574" width="5" height="9" fill="#000"/>
<rect x="732" y="575" width="3" height="7" fill="#0000ff"/>
<rect x="741" y="567" width="1" height="34" fill="#000"/>
<rect x="739" y="576" width="5" height="5" fill="#000"/>
<rect x="740" y="577" width="3" height="3" fill="#ff0000"/>
<rect x="749" y="560" width="1" height="22" fill="#000"/>
<rect x="747" y="569" width="5" height="8" fill="#000"/>
<rect x="748" y="570" width="3" height="6" fill="#ff0000"/>
<rect x="757" y="540" width="1" height="38" fill="#000"/>
<rect x="755" y="559" width="5" height="13" fill="#000"/>
<rect x="756" y="560" width="3" height="11" fill="#ff0000"/>
<rect x="765" y="542" width="1" height="21" fill="#000"/>
<rect x="763" y="554" width="5" height="7" fill="#000"/>
<rect x="764" y="555" width="3" height="5" fill="#ff0000"/>
<rect x="773" y="544" width="1" height="29" fill="#000"/>
<rect x="771" y="554" width="5" height="13" fill="#000"/>
<rect x="772" y="555" width="3" height="11" fill="#0000ff"/>
<rect x="781" y="527" width="1" height="41" fill="#000"/>
<rect x="779" y="544" width="5" height="23" fill="#000"/>
<rect x="780" y="545" width="3" height="21" fill="#ff0000"/>
<rect x="789" y="526" width="1" height="20" fill="#000"/>
<rect x="787" y="535" width="5" height="10" fill="#000"/>
<rect x="788" y="536" width="3" height="8" fill="#ff0000"/>
<rect x="797" y="523" width="1" height="22" fill="#000"/>
<rect x="795" y="532" width="5" height="3" fill="#000"/>
<rect x="796" y="533" width="3" height="1" fill="#ff0000"/>
<rect x="805" y="523" width="1" height="32" fill="#000"/>
<rect x="803" y="532" width="5" height="22" fill="#000"/>
<rect x="804" y="533" width="3" height="20" fill="#0000ff"/>
<rect x="813" y="539" width="1" height="17" fill="#000"/>
<rect x="811" y="542" width="5" height="11" fill="#000"/>
<rect x="812" y="543" width="3" height="9" fill="#ff0000"/>
<rect x="821" y="525" width="1" height="23" fill="#000"/>
<rect x="819" y="536" width="5" height="7" fill="#000"/>
<rect x="820" y="537" width="3" height="5" fill="#ff0000"/>
<rect x="829" y="518" width="1" height="30" fill="#000"/>
<rect x="827" y="536" width="5" height="3" fill="#000"/>
<rect x="828" y="537" width="3" height="1" fill="#0000ff"/>
<rect x="837" y="526" width="1" height="61" fill="#000"/>
<rect x="835" y="537" width="5" height="42" fill="#000"/>
<rect x="836" y="538" width="3" height="40" fill="#0000ff"/>
<rect x="845" y="526" width="1" height="61" fill="#000"/>
<rect x="843" y="530" width="5" height="49" fill="#000"/>
<rect x="844" y="531" width="3" height="47" fill="#ff0000"/>
<rect x="853" y="367" width="1" height="176" fill="#000"/>
<rect x="851" y="455" width="5" height="76" fill="#000"/>
<rect x="852" y="456" width="3" height="74" fill="#ff0000"/>
<rect x="861" y="419" width="1" height="52" fill="#000"/>
<rect x="859" y="450" width="5" height="6" fill="#000"/>
<rect x="860" y="451" width="3" height="4" fill="#ff0000"/>
<rect x="869" y="440" width="1" height="46" fill="#000"/>
<rect x="867" y="444" width="5" height="7" fill="#000"/>
<rect x="868" y="445" width="3" height="5" fill="#ff0000"/>
<rect x="877" y="405" width="1" height="49" fill="#000"/>
<rect x="875" y="420" width="5" height="25" fill="#000"/>
<rect x="876" y="421" width="3" height="23" fill="#ff0000"/>
<rect x="885" y="320" width="1" height="103" fill="#000"/>
<rect x="883" y="324" width="5" height="98" fill="#000"/>
<rect x="884" y="325" width="3" height="96" fill="#ff0000"/>
<rect x="893" y="251" width="1" height="182" fill="#000"/>
<rect x="891" y="305" width="5" height="20" fill="#000"/>
<rect x="892" y="306" width="3" height="18" fill="#ff0000"/>
<rect x="901" y="272" width="1" height="154" fill="#000"/>
<rect x="899" y="306" width="5" height="114" fill="#000"/>
<rect x="900" y="307" width="3" height="112" fill="#0000ff"/>
<rect x="909" y="358" width="1" height="90" fill="#000"/>
<rect x="907" y="418" width="5" height="11" fill="#000"/>
<rect x="908" y="419" width="3" height="9" fill="#0000ff"/>
<rect x="917" y="397" width="1" height="55" fill="#000"/>
<rect x="915" y="429" width="5" height="10" fill="#000"/>
<rect x="916" y="430" width="3" height="8" fill="#0000ff"/>
<rect x="925" y="427" width="1" height="39" fill="#000"/>
<rect x="923" y="437" width="5" height="13" fill="#000"/>
<rect x="924" y="438" width="3" height="11" fill="#0000ff"/>
<rect x="933" y="421" width="1" height="41" fill="#000"/>
<rect x="931" y="426" width="5" height="23" fill="#000"/>
<rect x="932" y="427" width="3" height="21" fill="#ff0000"/>
<rect x="941" y="423" width="1" height="39" fill="#000"/>
<rect x="939" y="425" width="5" height="23" fill="#000"/>
<rect x="940" y="426" width="3" height="21" fill="#0000ff"/>
<rect x="949" y="412" width="1" height="36" fill="#000"/>
<rect x="947" y="417" width="5" height="31" fill="#000"/>
<rect x="948" y="418" width="3" height="29" fill="#ff0000"/>
<rect x="957" y="400" width="1" height="19" fill="#000"/>
<rect x="955" y="408" width="5" height="10" fill="#000"/>
<rect x="956" y="409" width="3" height="8" fill="#ff0000"/>
<rect x="965" y="380" width="1" height="40" fill="#000"/>
<rect x="963" y="406" width="5" height="3" fill="#000"/>
<rect x="964" y="407" width="3" height="1" fill="#ff0000"/>
<rect x="973" y="403" width="1" height="67" fill="#000"/>
<rect x="971" y="406" width="5" height="24" fill="#000"/>
<rect x="972" y="407" width="3" height="22" fill="#0000ff"/>
<rect x="981" y="419" width="1" height="40" fill="#000"/>
<rect x="979" y="429" width="5" height="26" fill="#000"/>
<rect x="980" y="430" width="3" height="24" fill="#0000ff"/>
<rect x="989" y="435" width="1" height="23" fill="#000"/>
<rect x="987" y="440" width="5" height="16" fill="#000"/>
<rect x="988" y="441" width="3" height="14" fill="#ff0000"/>
<rect x="997" y="425" width="1" height="23" fill="#000"/>
<rect x="995" y="429" width="5" height="13" fill="#000"/>
<rect x="996" y="430" width="3" height="11" fill="#ff0000"/>
<rect x="1005" y="414" width="1" height="17" fill="#000"/>
<rect x="1003" y="425" width="5" height="5" fill="#000"/>
<rect x="1004" y="426" width="3" height="3" fill="#ff0000"/>
<rect x="1013" y="420" width="1" height="24" fill="#000"/>
<rect x="1011" y="426" width="5" height="8" fill="#000"/>
<rect x="1012" y="427" width="3" height="6" fill="#0000ff"/>
<rect x="1021" y="433" width="1" height="26" fill="#000"/>
<rect x="1019" y="434" width="5" height="24" fill="#000"/>
<rect x="1020" y="435" width="3" height="22" fill="#0000ff"/>
<rect x="1029" y="436" width="1" height="37" fill="#000"/>
<rect x="1027" y="457" width="5" height="14" fill="#000"/>
<rect x="1028" y="458" width="3" height="12" fill="#0000ff"/>
<rect x="1037" y="415" width="1" height="73" fill="#000"/>
<rect x="1035" y="452" width="5" height="21" fill="#000"/>
<rect x="1036" y="453" width="3" height="19" fill="#ff0000"/>
<polyline points="12,137 21,145.5 29,150 37,153.5 45,157.6 53,162.3 61,167 69,169 77,169 85,170.5 92,179.6 101,198.8 108,217.3 117,228.3 123,237.2 128,250 131,260 141,292.9 150,309 162,332.8 168,350 177,361.8 188,375 200,384 212,393 222,400 233,404 242,407 251,410 262,410 271,418 285,434 314,470 326,483 334,498 342,509 357,521 368,521 377,523 413,521 442,522 458,520 469,514 470,516.7 480,503.3 494,501.6 507,488.2 524,471.3 541,454.5 558,436 574.5,422.6 591,410.8 608,397.4 625,389 642,388 658.5,397.4 675,410.8 685,418 701,442 709,457 719,472 733,490 750,507 765,516 776,524 794,526 813,530 828,531 837,536 845,535 855,526 877,502 893,465 909,456 926,453 948,449 965,440 1012,438 1029,443 1037,443" fill="none" stroke="#ff0000" stroke-width="2" stroke-linejoin="round"/>
<polyline points="12,161.6 21,171.7 29,176.4 37,179 45,181.7 53,185.8 61,189 69,189 77,184 85,186 90,197 94,202 101,231 107,256 109,268 117,277 125,296 129,316 136,342 141,375 149,397 156,408 165,425 174,437 186,442 199,442 205,439 212,440 221,443 231,440 239,436.5 245,436 253,433 261,428 270,437 277,450.5 287,470 302,502.5 309,504 324,521 333,544 342,559 357,563 365,554 380,547 391,537 405,531 414,525 425,526 442,526 453,522.5 465,518 469,513.5 485,484.6 491,487 503,470 509,460 518,451 525,437 536,427 548,410.7 558,400 582,381 589,377.5 599,369 614,363 625,363 636,368 646,374 654,385 661,400 669,409.7 680,430 683,439 700,472 705,490 711,503 732,538 750,553 760,554 772,555.5 795,546 813,547 828,543 837,549 845,546 855,527 879,476.6 887,440 892,414 903,414.5 925,427 938,429 964,421 972,422 985,431 1012,430 1029,444 1037,445" fill="none" stroke="#0000ff" stroke-width="2" stroke-linejoin="round"/>
<polyline points="12,199 21,211 77,139 93,555 269,396 333,662 605,327 741,601 893,251 1037,488" fill="none" stroke="#8b4513" stroke-width="2" stroke-linejoin="round"/></g><rect x="12.5" y="109.5" width="1304" height="566" fill="none" stroke="#000"/></svg>
<svg class="a" style="left:16px;top:115px" width="8" height="6"><path d="M0 0h7l-3.5 5z" fill="#000"/></svg>
<div class="t b" style="left:28px;top:113px;font-size:10px;background:#fff;padding-right:1px;transform:scaleX(.89);transform-origin:0 0">EURGBPh,H1</div>
<div class="t b" style="left:91.5px;top:113px;font-size:10px;background:#fff;padding-right:1px;transform:scaleX(.89);transform-origin:0 0">0.76497</div>
<div class="t b" style="left:128px;top:113px;font-size:10px;background:#fff;padding-right:1px;transform:scaleX(.89);transform-origin:0 0">0.76660</div>
<div class="t b" style="left:163.7px;top:113px;font-size:10px;background:#fff;padding-right:1px;transform:scaleX(.89);transform-origin:0 0">0.76448</div>
<div class="t b" style="left:200px;top:113px;font-size:10px;background:#fff;padding-right:1px;transform:scaleX(.89);transform-origin:0 0">0.76554</div>
<div class="a" style="left:1317px;top:140px;width:2px;height:1px;background:#000"></div>
<div class="t b" style="left:1322px;top:135px;font-size:10px;transform:scaleX(.89);transform-origin:0 0">0.77455</div>
<div class="a" style="left:1317px;top:173px;width:2px;height:1px;background:#000"></div>
<div class="t b" style="left:1322px;top:168px;font-size:10px;transform:scaleX(.89);transform-origin:0 0">0.77360</div>
<div class="a" style="left:1317px;top:207px;width:2px;height:1px;background:#000"></div>
<div class="t b" style="left:1322px;top:202px;font-size:10px;transform:scaleX(.89);transform-origin:0 0">0.77260</div>
<div class="a" style="left:1317px;top:240px;width:2px;height:1px;background:#000"></div>
<div class="t b" style="left:1322px;top:235px;font-size:10px;transform:scaleX(.89);transform-origin:0 0">0.77165</div>
<div class="a" style="left:1317px;top:273px;width:2px;height:1px;background:#000"></div>
<div class="t b" style="left:1322px;top:268px;font-size:10px;transform:scaleX(.89);transform-origin:0 0">0.77070</div>
<div class="a" style="left:1317px;top:306px;width:2px;height:1px;background:#000"></div>
<div class="t b" style="left:1322px;top:301px;font-size:10px;transform:scaleX(.89);transform-origin:0 0">0.76975</div>
<div class="a" style="left:1317px;top:339px;width:2px;height:1px;background:#000"></div>
<div class="t b" style="left:1322px;top:334px;font-size:10px;transform:scaleX(.89);transform-origin:0 0">0.76880</div>
<div class="a" style="left:1317px;top:373px;width:2px;height:1px;background:#000"></div>
<div class="t b" style="left:1322px;top:368px;font-size:10px;transform:scaleX(.89);transform-origin:0 0">0.76780</div>
<div class="a" style="left:1317px;top:406px;width:2px;height:1px;background:#000"></div>
<div class="t b" style="left:1322px;top:401px;font-size:10px;transform:scaleX(.89);transform-origin:0 0">0.76685</div>
<div class="a" style="left:1317px;top:439px;width:2px;height:1px;background:#000"></div>
<div class="t b" style="left:1322px;top:434px;font-size:10px;transform:scaleX(.89);transform-origin:0 0">0.76590</div>
<div class="a" style="left:1317px;top:472px;width:2px;height:1px;background:#000"></div>
<div class="t b" style="left:1322px;top:467px;font-size:10px;transform:scaleX(.89);transform-origin:0 0">0.76495</div>
<div class="a" style="left:1317px;top:505px;width:2px;height:1px;background:#000"></div>
<div class="t b" style="left:1322px;top:500px;font-size:10px;transform:scaleX(.89);transform-origin:0 0">0.76400</div>
<div class="a" style="left:1317px;top:538px;width:2px;height:1px;background:#000"></div>
<div class="t b" style="left:1322px;top:533px;font-size:10px;transform:scaleX(.89);transform-origin:0 0">0.76305</div>
<div class="a" style="left:1317px;top:572px;width:2px;height:1px;background:#000"></div>
<div class="t b" style="left:1322px;top:567px;font-size:10px;transform:scaleX(.89);transform-origin:0 0">0.76205</div>
<div class="a" style="left:1317px;top:605px;width:2px;height:1px;background:#000"></div>
<div class="t b" style="left:1322px;top:600px;font-size:10px;transform:scaleX(.89);transform-origin:0 0">0.76110</div>
<div class="a" style="left:1317px;top:638px;width:2px;height:1px;background:#000"></div>
<div class="t b" style="left:1322px;top:633px;font-size:10px;transform:scaleX(.89);transform-origin:0 0">0.76015</div>
<div class="a" style="left:1317px;top:671px;width:2px;height:1px;background:#000"></div>
<div class="t b" style="left:1322px;top:666px;font-size:10px;transform:scaleX(.89);transform-origin:0 0">0.75920</div>
<div class="a" style="left:1317px;top:446px;width:42px;height:11px;background:#000"></div>
<div class="t b" style="left:1322px;top:447px;font-size:10px;color:#fff;transform:scaleX(.89);transform-origin:0 0">0.76554</div>
<div class="a" style="left:1317px;top:576px;width:42px;height:11px;background:#0000ff"></div>
<div class="t b" style="left:1322px;top:577px;font-size:10px;color:#fff;transform:scaleX(.89);transform-origin:0 0">0.76178</div>
<div class="a" style="left:13px;top:676px;width:1px;height:3px;background:#000"></div>
<div class="t b" style="left:13px;top:680px;font-size:10px;transform:scaleX(.89);transform-origin:0 0">14 Jan 2015</div>
<div class="a" style="left:77px;top:676px;width:1px;height:3px;background:#000"></div>
<div class="t b" style="left:77px;top:680px;font-size:10px;transform:scaleX(.89);transform-origin:0 0">15 Jan 07:00</div>
<div class="a" style="left:141px;top:676px;width:1px;height:3px;background:#000"></div>
<div class="t b" style="left:141px;top:680px;font-size:10px;transform:scaleX(.89);transform-origin:0 0">15 Jan 15:00</div>
<div class="a" style="left:205px;top:676px;width:1px;height:3px;background:#000"></div>
<div class="t b" style="left:205px;top:680px;font-size:10px;transform:scaleX(.89);transform-origin:0 0">15 Jan 23:00</div>
<div class="a" style="left:269px;top:676px;width:1px;height:3px;background:#000"></div>
<div class="t b" style="left:269px;top:680px;font-size:10px;transform:scaleX(.89);transform-origin:0 0">16 Jan 07:00</div>
<div class="a" style="left:333px;top:676px;width:1px;height:3px;background:#000"></div>
<div class="t b" style="left:333px;top:680px;font-size:10px;transform:scaleX(.89);transform-origin:0 0">16 Jan 15:00</div>
<div class="a" style="left:397px;top:676px;width:1px;height:3px;background:#000"></div>
<div class="t b" style="left:397px;top:680px;font-size:10px;transform:scaleX(.89);transform-origin:0 0">18 Jan 23:00</div>
<div class="a" style="left:461px;top:676px;width:1px;height:3px;background:#000"></div>
<div class="t b" style="left:461px;top:680px;font-size:10px;transform:scaleX(.89);transform-origin:0 0">19 Jan 07:00</div>
<div class="a" style="left:525px;top:676px;width:1px;height:3px;background:#000"></div>
<div class="t b" style="left:525px;top:680px;font-size:10px;transform:scaleX(.89);transform-origin:0 0">19 Jan 15:00</div>
<div class="a" style="left:589px;top:676px;width:1px;height:3px;background:#000"></div>
<div class="t b" style="left:589px;top:680px;font-size:10px;transform:scaleX(.89);transform-origin:0 0">20 Jan 00:00</div>
<div class="a" style="left:653px;top:676px;width:1px;height:3px;background:#000"></div>
<div class="t b" style="left:653px;top:680px;font-size:10px;transform:scaleX(.89);transform-origin:0 0">20 Jan 08:00</div>
<div class="a" style="left:717px;top:676px;width:1px;height:3px;background:#000"></div>
<div class="t b" style="left:717px;top:680px;font-size:10px;transform:scaleX(.89);transform-origin:0 0">20 Jan 16:00</div>
<div class="a" style="left:781px;top:676px;width:1px;height:3px;background:#000"></div>
<div class="t b" style="left:781px;top:680px;font-size:10px;transform:scaleX(.89);transform-origin:0 0">21 Jan 00:00</div>
<div class="a" style="left:845px;top:676px;width:1px;height:3px;background:#000"></div>
<div class="t b" style="left:845px;top:680px;font-size:10px;transform:scaleX(.89);transform-origin:0 0">21 Jan 08:00</div>
<div class="a" style="left:909px;top:676px;width:1px;height:3px;background:#000"></div>
<div class="t b" style="left:909px;top:680px;font-size:10px;transform:scaleX(.89);transform-origin:0 0">21 Jan 16:00</div>
<div class="a" style="left:973px;top:676px;width:1px;height:3px;background:#000"></div>
<div class="t b" style="left:973px;top:680px;font-size:10px;transform:scaleX(.89);transform-origin:0 0">22 Jan 00:00</div>
<div class="a" style="left:1037px;top:676px;width:1px;height:3px;background:#000"></div>
<div class="t b" style="left:1037px;top:680px;font-size:10px;transform:scaleX(.89);transform-origin:0 0">22 Jan 08:00</div>
<svg class="a" style="left:1048px;top:110px" width="11" height="6"><path d="M0 0h10l-5 5z" fill="#c0c0c0"/></svg>
<div class="a" style="left:10px;top:693px;width:1349px;height:1px;background:#e4e4e4"></div>
<div class="a" style="left:8px;top:695px;width:1353px;height:1px;background:#000"></div>
<div class="a" style="left:8px;top:696px;width:2px;height:18px;background:#a0a0a0"></div>
<div class="t" style="left:-2.700000000000003px;width:120px;text-align:center;top:699px;font-size:11px;color:#6a6a86;transform:scaleX(.91)">USDCHFh,M30</div>
<div class="t" style="left:84.80000000000001px;width:120px;text-align:center;top:699px;font-size:11px;color:#6a6a86;transform:scaleX(.91)">EURUSDh,H1</div>
<div class="t" style="left:169.4px;width:120px;text-align:center;top:699px;font-size:11px;color:#6a6a86;transform:scaleX(.91)">GBPUSDh,H1</div>
<div class="t" style="left:253.5px;width:120px;text-align:center;top:699px;font-size:11px;color:#6a6a86;transform:scaleX(.91)">USDJPYh,H4</div>
<div class="t" style="left:337.2px;width:120px;text-align:center;top:699px;font-size:11px;color:#6a6a86;transform:scaleX(.91)">EURJPYh,H4</div>
<div class="t" style="left:424.7px;width:120px;text-align:center;top:699px;font-size:11px;color:#6a6a86;transform:scaleX(.91)">GBPCHFh,M30</div>
<div class="t" style="left:516px;width:120px;text-align:center;top:699px;font-size:11px;color:#6a6a86;transform:scaleX(.91)">AUDUSDh,H1</div>
<div class="t" style="left:599.5px;width:120px;text-align:center;top:699px;font-size:11px;color:#6a6a86;transform:scaleX(.91)">GBPJPYh,H4</div>
<div class="t" style="left:767.6px;width:120px;text-align:center;top:699px;font-size:11px;color:#6a6a86;transform:scaleX(.91)">USDCADh,H4</div>
<div class="t" style="left:858.6px;width:120px;text-align:center;top:699px;font-size:11px;color:#6a6a86;transform:scaleX(.91)">XAUUSDh,Daily</div>
<div class="t" style="left:955.2px;width:120px;text-align:center;top:699px;font-size:11px;color:#6a6a86;transform:scaleX(.91)">USDCADh,Daily</div>
<div class="t" style="left:1045px;width:120px;text-align:center;top:699px;font-size:11px;color:#6a6a86;transform:scaleX(.91)">NZDUSDh,H4</div>
<div class="t" style="left:1135.2px;width:120px;text-align:center;top:699px;font-size:11px;color:#6a6a86;transform:scaleX(.91)">AUDNZDh,Daily</div>
<div class="a" style="left:105px;top:699px;width:1px;height:12px;background:#404040"></div>
<div class="a" style="left:188px;top:699px;width:1px;height:12px;background:#404040"></div>
<div class="a" style="left:272px;top:699px;width:1px;height:12px;background:#404040"></div>
<div class="a" style="left:356px;top:699px;width:1px;height:12px;background:#404040"></div>
<div class="a" style="left:440px;top:699px;width:1px;height:12px;background:#404040"></div>
<div class="a" style="left:533px;top:699px;width:1px;height:12px;background:#404040"></div>
<div class="a" style="left:620px;top:699px;width:1px;height:12px;background:#404040"></div>
<div class="a" style="left:872px;top:699px;width:1px;height:12px;background:#404040"></div>
<div class="a" style="left:968px;top:699px;width:1px;height:12px;background:#404040"></div>
<div class="a" style="left:1064px;top:699px;width:1px;height:12px;background:#404040"></div>
<div class="a" style="left:1148px;top:699px;width:1px;height:12px;background:#404040"></div>
<div class="a" style="left:1244px;top:699px;width:1px;height:12px;background:#404040"></div>
<div class="a" style="left:700px;top:695px;width:84px;height:19px;background:#fff;border:1px solid #000;border-top:0;box-shadow:1px 1px 0 #a0a0a0"></div>
<div class="t" style="left:682px;width:120px;text-align:center;top:699px;font-size:11px;color:#000;transform:scaleX(.91)">EURGBPh,H1</div>
<svg class="a" style="left:1330px;top:700px" width="26" height="10"><path d="M5 1l-4 4l4 4z" fill="#a0a0a0"/><path d="M20 1l4 4l-4 4z" fill="#a0a0a0"/></svg>
<div class="a" style="left:8px;top:715px;width:1353px;height:1px;background:#fcfcfc"></div>
<div class="t" style="left:10px;top:721px;font-size:11.5px">Для справки, нажмите F1</div>
<div class="t" style="left:641px;top:721px;font-size:11.5px">Default</div>
<div class="a" style="left:635px;top:719px;width:1px;height:16px;background:#a0a0a0"></div>
<div class="a" style="left:751px;top:719px;width:1px;height:16px;background:#a0a0a0"></div>
<div class="a" style="left:853px;top:719px;width:1px;height:16px;background:#a0a0a0"></div>
<div class="a" style="left:925px;top:719px;width:1px;height:16px;background:#a0a0a0"></div>
<div class="a" style="left:995px;top:719px;width:1px;height:16px;background:#a0a0a0"></div>
<div class="a" style="left:1063px;top:719px;width:1px;height:16px;background:#a0a0a0"></div>
<div class="a" style="left:1133px;top:719px;width:1px;height:16px;background:#a0a0a0"></div>
<div class="a" style="left:1200px;top:719px;width:1px;height:16px;background:#a0a0a0"></div>
<svg class="a" style="left:0;top:0" width="1369" height="744"><rect x="1205" y="721" width="2" height="8" fill="#3f7000"/><rect x="1205" y="731" width="2" height="2" fill="#a00000"/><rect x="1208" y="721" width="2" height="7" fill="#3f7000"/><rect x="1208" y="730" width="2" height="3" fill="#a00000"/><rect x="1211" y="721" width="2" height="7" fill="#3f7000"/><rect x="1211" y="729" width="2" height="4" fill="#a00000"/><rect x="1214" y="721" width="2" height="6" fill="#3f7000"/><rect x="1214" y="728" width="2" height="5" fill="#a00000"/><rect x="1217" y="721" width="2" height="5" fill="#3f7000"/><rect x="1217" y="727" width="2" height="6" fill="#a00000"/><rect x="1220" y="721" width="2" height="4" fill="#3f7000"/><rect x="1220" y="726" width="2" height="7" fill="#a00000"/><rect x="1223" y="721" width="2" height="3" fill="#3f7000"/><rect x="1223" y="725" width="2" height="8" fill="#a00000"/><rect x="1226" y="721" width="2" height="1" fill="#3f7000"/><rect x="1226" y="724" width="2" height="9" fill="#a00000"/></svg>
<div class="t" style="left:1262px;top:721px;font-size:11.5px">5328/6 kb</div>
<div class="a" style="left:0;top:728px;width:1369px;height:1px;background:rgba(80,40,110,0.45)"></div>
<div class="a" style="left:0;top:729px;width:1369px;height:7px;background:rgba(105,55,150,0.55)"></div>
<div class="a" style="left:0;top:736px;width:1369px;height:8px;background:#8752b4"></div>
<svg class="a" style="left:0;top:0" width="1369" height="744"><rect x="176.5" y="728.5" width="58" height="20" fill="rgba(255,255,255,0.12)" stroke="rgba(255,255,255,0.3)"/><path d="M175.5 728v20" stroke="rgba(60,20,90,.45)"/><rect x="362.5" y="728.5" width="58" height="20" fill="rgba(255,255,255,0.12)" stroke="rgba(255,255,255,0.3)"/><path d="M361.5 728v20" stroke="rgba(60,20,90,.45)"/><rect x="424.5" y="728.5" width="58" height="20" fill="rgba(255,255,255,0.12)" stroke="rgba(255,255,255,0.3)"/><path d="M423.5 728v20" stroke="rgba(60,20,90,.45)"/><rect x="486.5" y="728.5" width="58" height="20" fill="rgba(255,255,255,0.18)" stroke="rgba(255,255,255,0.6)"/><rect x="548.5" y="728.5" width="58" height="20" fill="rgba(255,255,255,0.12)" stroke="rgba(255,255,255,0.3)"/><path d="M547.5 728v20" stroke="rgba(60,20,90,.45)"/><rect x="610.5" y="728.5" width="58" height="20" fill="rgba(255,255,255,0.12)" stroke="rgba(255,255,255,0.3)"/><path d="M609.5 728v20" stroke="rgba(60,20,90,.45)"/><rect x="672.5" y="728.5" width="58" height="20" fill="rgba(255,255,255,0.12)" stroke="rgba(255,255,255,0.3)"/><path d="M671.5 728v20" stroke="rgba(60,20,90,.45)"/><path d="M12 737l11-1.5v9h-11z M25 735.2l13-1.8v11h-13z" fill="#fff"/><rect x="66" y="734" width="30" height="10" fill="#108a10"/><path d="M74 741h14v3h-14z" fill="#fff"/><path d="M79 740a3 3 0 0 1 5 0" stroke="#fff" fill="none" stroke-width="1.5"/><path d="M128 737l14-3v10h-14z" fill="#2b579a"/><rect x="142" y="736" width="16" height="8" fill="#fff"/><path d="M145 739h10M145 742h10" stroke="#2b579a" stroke-width="1.5"/><circle cx="205" cy="746.5" r="12" fill="#db3a30"/><path d="M193 746.5a12 12 0 0 0 6 10.4l6-10.4z" fill="#20a040"/><path d="M217 746.5a12 12 0 0 1-6 10.4l-6-10.4z" fill="#f8c820"/><circle cx="205" cy="746.5" r="5.5" fill="#fff"/><circle cx="205" cy="746.5" r="4.2" fill="#3a80e0"/><path d="M253 733h18l9 11h-29z" fill="#9cc8f0" stroke="#5a9ad8" stroke-width=".8"/><path d="M262 744a5 5 0 0 1 10 0z" fill="#fff"/><path d="M314 733h18l9 11h-27z" fill="#f8f8f8" stroke="#c8c8c8" stroke-width=".8"/><path d="M323 744v-7h3" stroke="#f03020" stroke-width="2.2" fill="none"/><circle cx="389" cy="746" r="12" fill="#f4f4f4"/><path d="M378 739l10 5 12-8" stroke="#ee1010" stroke-width="4" fill="none"/><circle cx="452" cy="747" r="12" fill="#12a8e8"/><path d="M448 744a4 4 0 0 1 8 0" stroke="#fff" stroke-width="2.2" fill="none"/><circle cx="515" cy="748" r="11" fill="#a82010"/><path d="M520 738a11 11 0 0 1 6 8l-6 0z" fill="#e8a090"/><circle cx="577" cy="747" r="10" fill="#f0a040"/><path d="M569 742a10 6 0 0 1 16 0z" fill="#fbe8c8"/><rect x="625" y="732" width="28" height="12" fill="#fff"/><circle cx="639" cy="744" r="8" fill="#2a70c8"/><path d="M633 739a8 8 0 0 1 12 0l-4 5z" fill="#f07828"/><path d="M687 737h8l2 2h17v5h-27z" fill="#e8c860"/><rect x="690" y="735" width="3" height="2" fill="#30a030"/><rect x="698" y="736" width="3" height="2" fill="#d03030"/><rect x="706" y="739" width="4" height="2" fill="#3070d0"/><path d="M1155 744l2-2 2 2z" fill="#fff"/><rect x="1175" y="742" width="15" height="2" fill="#e8e8e8"/><rect x="1200" y="741" width="2" height="3" fill="#fff"/><rect x="1204" y="742" width="8" height="2" fill="#fff"/><rect x="1224" y="742" width="11" height="2" fill="#fff"/><text x="1307" y="747" font-family="Liberation Sans" font-size="13" fill="#fff" textLength="26">11:41</text></svg>
<svg class="a" style="left:1344px;top:719px" width="17" height="17"><path d="M16 3L3 16M16 7L7 16M16 11L11 16" stroke="#a0a0a0" stroke-width="1.2"/><path d="M16 4L4 16M16 8L8 16M16 12L12 16" stroke="#fff" stroke-width=".8"/></svg>
<div class="a" style="left:1366px;top:0;width:3px;height:744px;background:#fff"></div>
</body></html>
